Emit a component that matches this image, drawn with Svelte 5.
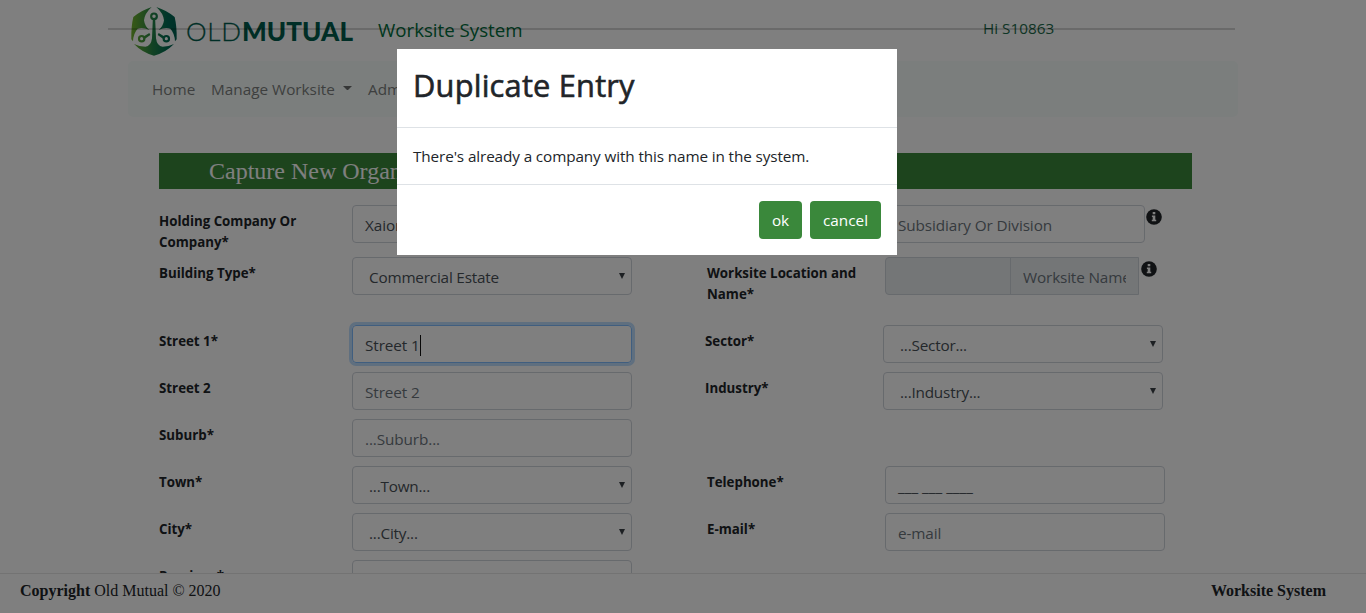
<script>
  const rows = [
    { height: 52, left: { label: 'Holding Company Or Company*', text: 'Xaion', kind: 'value' }, right: { label: 'Subsidiary Or Division', text: 'Subsidiary Or Division', kind: 'hint', width: 260, info: 0.5 } },
    { height: 68, left: { label: 'Building Type*', text: 'Commercial Estate', kind: 'select' }, right: { label: 'Worksite Location and Name*', text: 'Worksite Name', kind: 'split', width: 254, info: 2 } },
    { height: 47, near: true, left: { label: 'Street 1*', text: 'Street 1', kind: 'focus' }, right: { label: 'Sector*', text: '...Sector...', kind: 'select' } },
    { height: 47, near: true, left: { label: 'Street 2', text: 'Street 2', kind: 'hint' }, right: { label: 'Industry*', text: '...Industry...', kind: 'select' } },
    { height: 47, left: { label: 'Suburb*', text: '...Suburb...', kind: 'hint' } },
    { height: 47, left: { label: 'Town*', text: '...Town...', kind: 'select' }, right: { label: 'Telephone*', text: '___ ___ ____', kind: 'value phone' } },
    { height: 47, left: { label: 'City*', text: '...City...', kind: 'select' }, right: { label: 'E-mail*', text: 'e-mail', kind: 'hint' } },
    { height: 47, left: { label: 'Province*', text: '', kind: 'hint' } }
  ];
</script>

{#snippet field(f)}
  <div class="label"><span>{f.label}</span></div>
  <div class="cell">
    <div class="control {f.kind}" style:width="{f.width ?? 280}px">
      {#if f.kind === 'split'}
        <div class="prefix"></div>
        <div class="suffix"><span>{f.text}</span></div>
      {:else}
        <span>{f.text}</span>
        {#if f.kind === 'focus'}<i class="cursor"></i>{/if}
        {#if f.kind === 'select'}
          <svg class="arrow" width="6" height="6" viewBox="0 0 6 6"><path d="M0 0h6L3 6z" fill="#3b4046" /></svg>
        {/if}
      {/if}
    </div>
    {#if f.info}
      <svg class="info" style:margin-left="{f.info}px" width="16" height="16" viewBox="0 0 16 16">
        <circle cx="8" cy="8" r="7.8" fill="#212529" />
        <path d="M6.7 3h2.6v2.3H6.7zM5.9 6.5h3.4v4.2h.9v1.6H5.8v-1.6h.9V8.1h-.8z" fill="#fff" />
      </svg>
    {/if}
  </div>
{/snippet}

<div class="page">
  <header>
    <svg class="logo" width="226" height="52" viewBox="0 0 226 52">
      <defs>
        <linearGradient id="leaf" x1="0" y1="0" x2="150" y2="0" gradientUnits="userSpaceOnUse">
          <stop offset="0" stop-color="#78b62c" />
          <stop offset=".45" stop-color="#258548" />
          <stop offset=".75" stop-color="#006b54" />
          <stop offset="1" stop-color="#005d51" />
        </linearGradient>
      </defs>
      <g transform="scale(.3333)" fill="url(#leaf)">
        <path d="M65 6Q34 16 10 36Q3 65 4 103L9 109Q10 85 23 71Q38 65 58 75Q44 63 42 46Q44 25 65 6Z" />
        <path d="M79 6Q110 16 134 36Q141 65 140 103L135 109Q134 85 121 71Q106 65 86 75Q100 63 102 46Q100 25 79 6Z" />
        <path d="M68.500 43H75.500L78 100Q81 124 98 125Q116 125 132 117Q107 143 72 152Q37 143 12 117Q28 125 46 125Q63 124 66 100Z" />
        <path d="M58 84L61 90L43 103L38 96ZM86 84L83 90L101 103L106 96Z" />
        <g fill="none" stroke="url(#leaf)" stroke-width="6.5">
          <circle cx="72" cy="34" r="8.5" /><circle cx="35" cy="101" r="8" /><circle cx="109" cy="101" r="8" />
        </g>
      </g>
      <text x="56" y="35.5" font-size="26" font-weight="300" textLength="55" stroke="#005d4c" stroke-width=".3">OLD</text>
      <text x="112" y="35.5" font-size="26" font-weight="900" textLength="111">MUTUAL</text>
    </svg>
    <span class="system">Worksite System</span>
    <span class="user">Hi S10863</span>
  </header>

  <nav>
    <span class="home">Home</span>
    <span class="manage">Manage Worksite</span>
    <i class="caret"></i>
    <span class="admin">Admin</span>
  </nav>

  <main>
    <h2>Capture New Organisation</h2>
    {#each rows as r}
      <div class="row" class:near={r.near} style:height="{r.height}px">
        {@render field(r.left)}
        {#if r.right}{@render field(r.right)}{/if}
      </div>
    {/each}
  </main>

  <footer>
    <span><b>Copyright</b> Old Mutual © 2020</span>
    <b>Worksite System</b>
  </footer>

  <div class="overlay">
    <section class="dialog">
      <h1><span>Duplicate Entry</span></h1>
      <p><span>There's already a company with this name in the system.</span></p>
      <div class="actions">
        <button class="ok">ok</button>
        <button class="cancel">cancel</button>
      </div>
    </section>
  </div>
</div>

<style>
  :global(body) { background: #fff; }
  .page, .page * { box-sizing: border-box; }
  .page {
    position: relative;
    display: flex;
    flex-direction: column;
    width: 1366px;
    height: 613px;
    overflow: hidden;
    background: #fff;
    color: #212529;
    font-family: "Open Sans", "Noto Sans", sans-serif;
    font-size: 15.3px;
    line-height: 24px;
    white-space: nowrap;
  }
  header {
    position: relative;
    flex: none;
    display: flex;
    align-items: flex-start;
    height: 61px;
    padding: 5px 0 0 130px;
  }
  header::after {
    content: "";
    position: absolute;
    left: 108px;
    top: 28px;
    width: 1127px;
    height: 2px;
    background: rgba(0, 0, 0, .17);
  }
  .logo { flex: none; }
  .logo text { font-family: Lato, sans-serif; fill: #005d4c; }
  .system {
    width: 605px;
    margin: 13px 0 0 22px;
    color: #00703c;
    font-size: 18.7px;
  }
  .user { margin-top: 11px; color: #1d6c4c; }
  nav {
    flex: none;
    display: flex;
    align-items: center;
    width: 1110px;
    height: 56px;
    margin-left: 128px;
    padding-left: 24px;
    border-radius: 5px;
    background: #f7fdfa;
    color: #7c7f7e;
  }
  .home { width: 59px; }
  .manage { width: 132px; }
  .caret {
    width: 9px;
    margin: -2px 16px 0 0;
    border: 4.5px solid transparent;
    border-top-color: #6c6f6e;
    border-bottom: 0;
  }
  main {
    flex: 1;
    min-height: 0;
    overflow: hidden;
    padding: 36px 0 0 159px;
  }
  h2 {
    width: 1033px;
    height: 36px;
    margin: 0 0 16px;
    padding-left: 50px;
    background: #3a883b;
    color: #fff;
    font: 24px/37px "Liberation Serif", serif;
  }
  .row { display: grid; grid-template-columns: 193px 355px 178px 320px; }
  .near { grid-template-columns: 193px 353px 178px 320px; }
  .label {
    padding-top: 6px;
    font-size: 13.3px;
    font-weight: 700;
    line-height: 21px;
    white-space: normal;
  }
  .label span { display: block; width: 155px; }
  .cell { display: flex; align-items: flex-start; }
  .control {
    display: flex;
    align-items: center;
    height: 38px;
    padding: 2px 12px 0;
    border: 1px solid #ced4da;
    border-radius: 4px;
    color: #495057;
    letter-spacing: -.1px;
  }
  .hint { color: #6c757d; }
  .select { padding: 2px 6px 0 16px; letter-spacing: -.2px; }
  .arrow { margin: -3px 0 0 auto; }
  .focus { border-color: #80bdff; box-shadow: 0 0 0 3px #bfdeff; }
  .cursor { width: 1px; height: 21px; background: #111; }
  .phone { letter-spacing: 0; }
  .split {
    padding: 0;
    border-radius: 4px 0 0 4px;
    background: #e9ecef;
    color: #6c757d;
    letter-spacing: 0;
  }
  .prefix { width: 126px; height: 36px; border-right: 1px solid #ced4da; }
  .suffix { flex: 1; padding: 2px 12px 0; }
  .suffix span { display: block; width: 103px; overflow: hidden; letter-spacing: -.15px; }
  .info { flex: none; margin-top: 4px; }
  footer {
    flex: none;
    display: flex;
    justify-content: space-between;
    height: 40px;
    padding: 5px 40px 0 20px;
    border-top: 1px solid #e7e7e7;
    font: 16px/24px "Liberation Serif", serif;
  }
  .overlay {
    position: absolute;
    inset: 0;
    padding: 49px 0 0 397px;
    background: rgba(0, 0, 0, .5);
  }
  .dialog { width: 500px; height: 206px; background: #fff; }
  h1 {
    height: 79px;
    margin: 0;
    padding: 12px 16px;
    border-bottom: 1px solid #dee2e6;
    font-size: 30.8px;
    font-weight: 500;
    line-height: 48px;
    letter-spacing: .2px;
    -webkit-text-stroke: .6px #212529;
  }
  p {
    height: 57px;
    margin: 0;
    padding: 16px;
    border-bottom: 1px solid #dee2e6;
    letter-spacing: -.12px;
  }
  .actions { display: flex; justify-content: flex-end; gap: 8px; padding: 16px; }
  button {
    height: 38px;
    padding: 0 0 1px;
    border: 0;
    border-radius: 4px;
    background: #3a883b;
    color: #fff;
    font: inherit;
  }
  .ok { width: 43px; }
  .cancel { width: 71px; }
</style>
